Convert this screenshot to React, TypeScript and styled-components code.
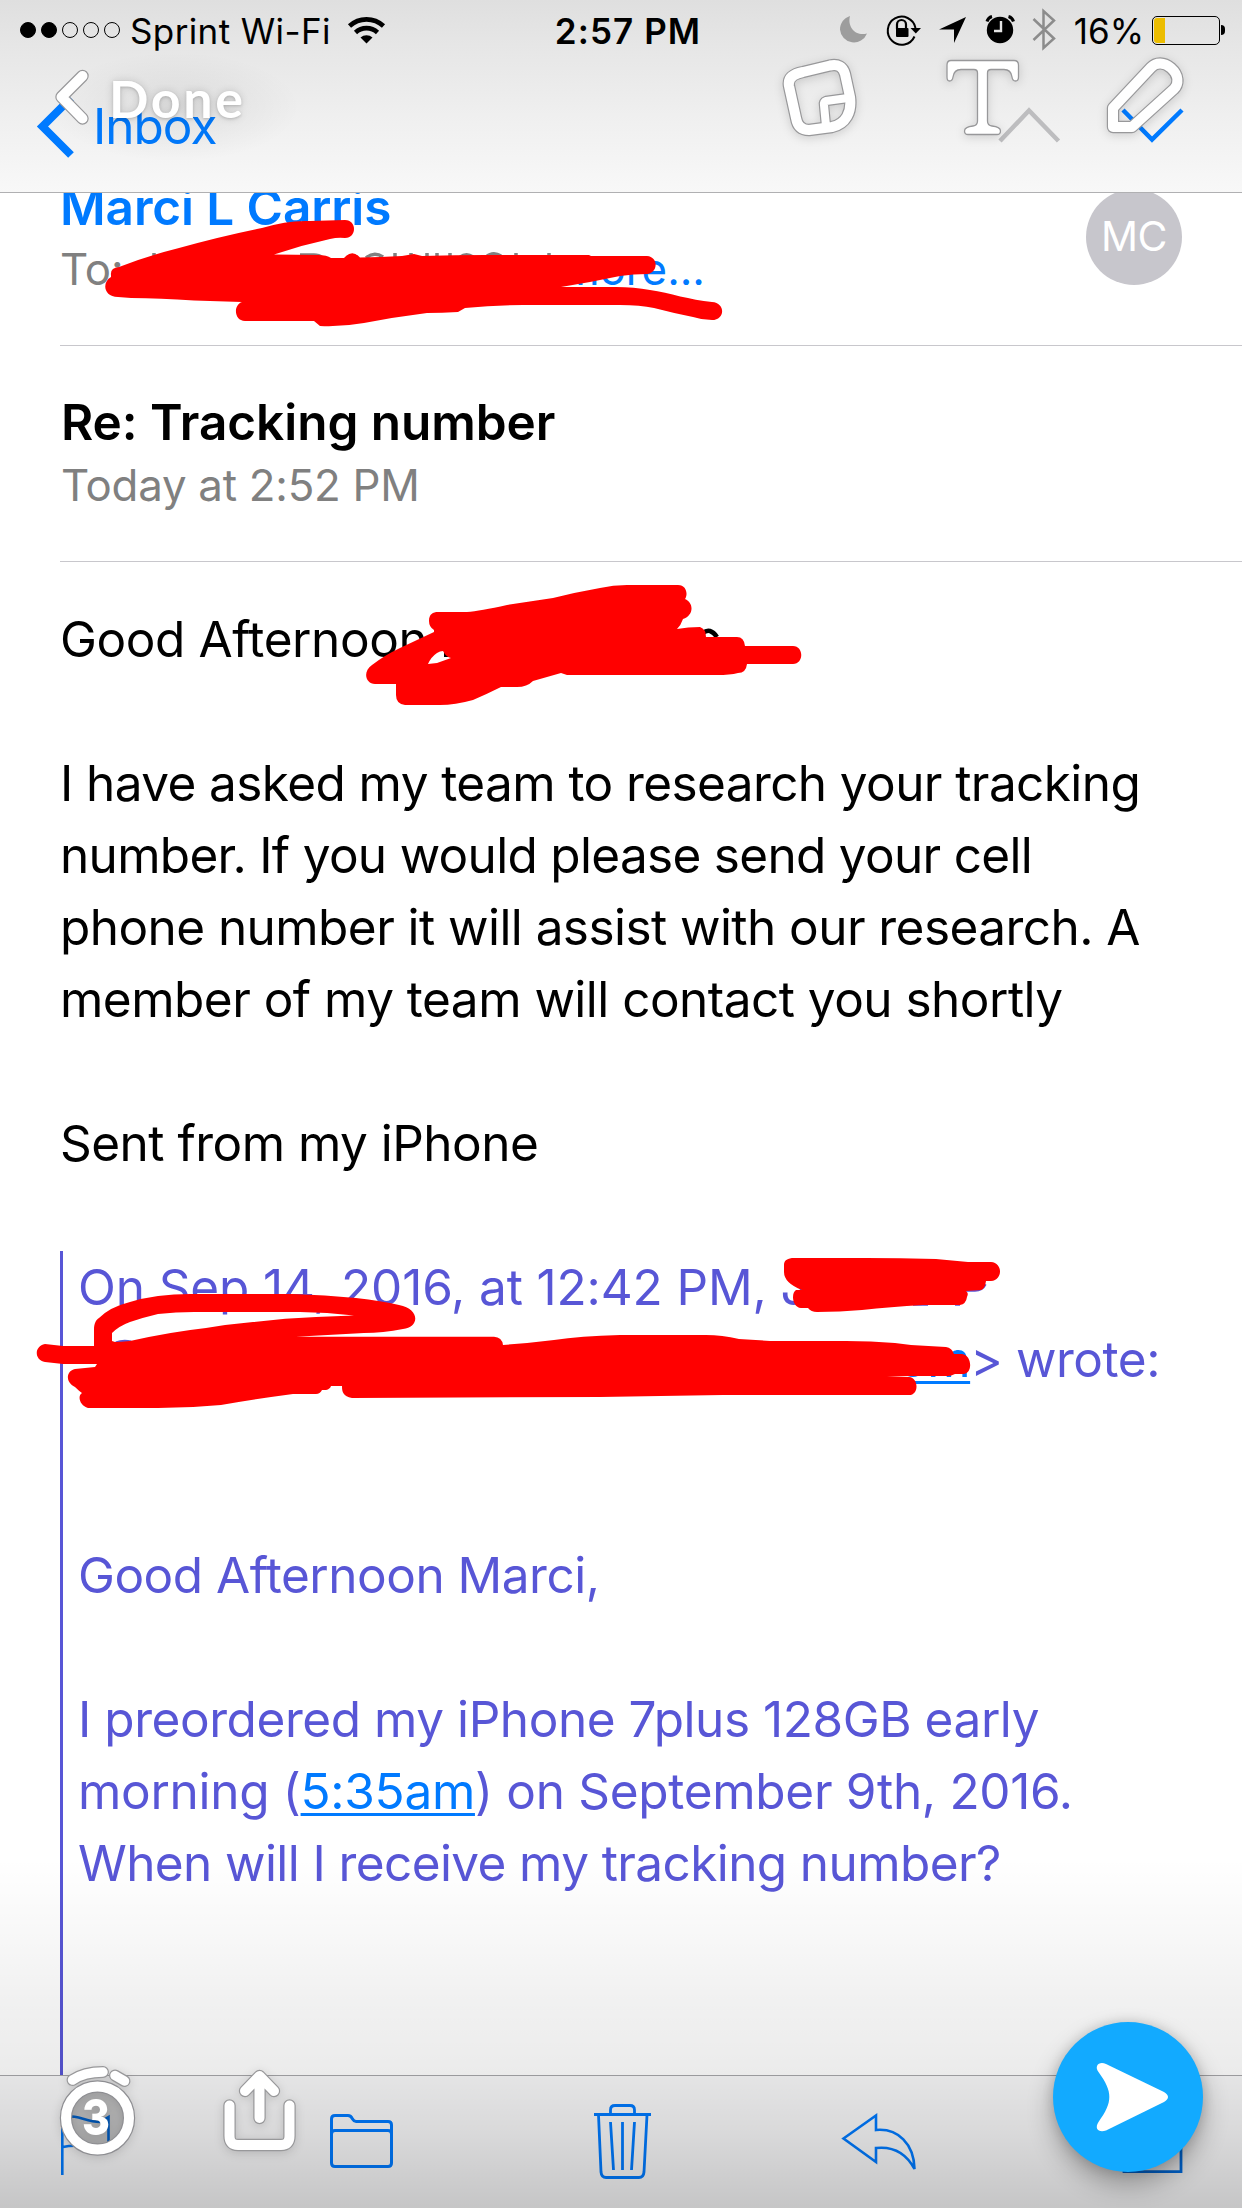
import React from "react";
import styled, { createGlobalStyle } from "styled-components";

const BLUE = "#007aff";
const QUOTE = "#5856d6";
const RED = "#ff0000";

const GlobalStyle = createGlobalStyle`
  body { margin: 0; background: #fff; }
  * { box-sizing: border-box; }
`;

/* ---------- shell ---------- */

const Screen = styled.div`
  position: relative;
  width: 1242px;
  height: 2208px;
  overflow: hidden;
  display: grid;
  grid-template-rows: 193px 1fr 133px;
  background: #fff;
  font-family: Inter, "Liberation Sans", sans-serif;
  color: #000;
`;

const Top = styled.header`
  background: linear-gradient(#dfdfdf 0, #e6e6e6 45px, #efefef 115px, #f8f8f8 192px);
  border-bottom: 1px solid #b0b0b2;
  display: flex;
  flex-direction: column;
`;

const StatusBar = styled.div`
  height: 60px;
  padding: 0 17px 0 20px;
  display: grid;
  grid-template-columns: 1fr auto 1fr;
  align-items: center;
`;

const StatusGroup = styled.div<{ $end?: boolean }>`
  display: flex;
  align-items: center;
  justify-content: ${(p) => (p.$end ? "flex-end" : "flex-start")};
  height: 60px;
`;

const StatusText = styled.span<{ $weight?: number; $spacing?: number; $before?: number }>`
  font-size: 35px;
  line-height: 60px;
  height: 60px;
  padding-top: 1px;
  margin-left: ${(p) => p.$before ?? 0}px;
  font-weight: ${(p) => p.$weight ?? 400};
  letter-spacing: ${(p) => p.$spacing ?? 0}px;
  white-space: nowrap;
`;

const Dots = styled.div`
  display: flex;
  gap: 5px;
  margin-right: 10px;
`;

const Dot = styled.i<{ $on?: boolean }>`
  width: 16px;
  height: 16px;
  border-radius: 50%;
  border: 1px solid #000;
  background: ${(p) => (p.$on ? "#000" : "transparent")};
`;

const Battery = styled.div`
  width: 68px;
  height: 29px;
  margin-left: 8px;
  padding: 1px;
  border: 1px solid #000;
  border-radius: 5px;
`;

const Charge = styled.div`
  width: 11px;
  height: 25px;
  background: #ecbd00;
  border-radius: 3px 0 0 3px;
`;

const BatteryTip = styled.div`
  width: 4px;
  height: 10px;
  margin-left: 1px;
  border-radius: 0 4px 4px 0;
  background: #000;
`;

const MailNav = styled.nav`
  flex: 1;
  display: flex;
  align-items: flex-start;
  justify-content: space-between;
  padding: 34px 58px 0 35px;
`;

const Back = styled.div`
  display: flex;
  align-items: flex-start;
  gap: 17px;
`;

const BackLabel = styled.span`
  color: ${BLUE};
  font-size: 49.5px;
  line-height: 60px;
  margin-top: 2px;
  letter-spacing: -1px;
`;

const NavArrows = styled.div`
  display: flex;
  gap: 60px;
  padding-top: 13px;
`;

/* ---------- message ---------- */

const Message = styled.main`
  overflow: hidden;
  display: flex;
  flex-direction: column;
`;

const From = styled.section`
  height: 153px;
  flex: none;
  margin-left: 60px;
  padding-right: 60px;
  border-bottom: 1px solid #c8c7cc;
  display: flex;
  justify-content: space-between;
`;

const Sender = styled.div`
  margin-top: -16px;
  color: ${BLUE};
  font-size: 49.5px;
  font-weight: 600;
  line-height: 60px;
  letter-spacing: -0.1px;
`;

const Recipient = styled.div`
  display: flex;
  justify-content: space-between;
  width: 645px;
  margin-top: 6px;
  font-size: 43.8px;
  line-height: 54px;
  color: #808080;
`;

const More = styled.span`
  color: ${BLUE};
`;

const Avatar = styled.div`
  width: 96px;
  height: 96px;
  margin-top: -4px;
  border-radius: 50%;
  background: #c7c6cc;
  color: #fff;
  font-size: 41px;
  line-height: 95px;
  text-align: center;
  letter-spacing: -0.5px;
`;

const Heading = styled.section`
  height: 216px;
  flex: none;
  margin-left: 60px;
  padding: 46px 0 0 1px;
  border-bottom: 1px solid #c8c7cc;
`;

const Subject = styled.h1`
  margin: 0;
  font-size: 49.5px;
  font-weight: 600;
  line-height: 60px;
  letter-spacing: -0.05px;
`;

const When = styled.div`
  margin-top: 7px;
  font-size: 43.8px;
  line-height: 54px;
  letter-spacing: -0.25px;
  color: #808080;
`;

const Body = styled.section`
  flex: 1;
  padding: 41px 0 0 60px;
  display: flex;
  flex-direction: column;
`;

const Line = styled.div<{ $spacing?: number; $indent?: number }>`
  height: 72px;
  flex: none;
  font-size: 49.5px;
  line-height: 72px;
  white-space: pre;
  letter-spacing: ${(p) => p.$spacing ?? -0.5}px;
  padding-left: ${(p) => p.$indent ?? 0}px;
`;

const Quote = styled.blockquote`
  flex: 1;
  margin: 0;
  padding-left: 15px;
  border-left: 3px solid ${QUOTE};
  color: ${QUOTE};
`;

const Link = styled.span`
  color: ${BLUE};
  text-decoration: underline;
  text-decoration-thickness: 3px;
  text-underline-offset: 4px;
  text-decoration-skip-ink: none;
`;

/* ---------- mail toolbar ---------- */

const Toolbar = styled.footer`
  background: #f8f8f9;
  border-top: 1px solid #a8a7ab;
  display: flex;
  justify-content: space-between;
  align-items: flex-start;
  padding: 26px 58px 0 59px;
`;

const BottomShade = styled.div`
  position: absolute;
  left: 0;
  right: 0;
  bottom: 0;
  height: 350px;
  background: linear-gradient(
    rgba(0, 0, 0, 0) 0,
    rgba(0, 0, 0, 0.055) 142px,
    rgba(0, 0, 0, 0.08) 215px,
    rgba(0, 0, 0, 0.125) 275px,
    rgba(0, 0, 0, 0.205) 350px
  );
`;

/* ---------- snap editor overlay ---------- */

const Ink = styled.svg`
  position: absolute;
  inset: 0;
  width: 1242px;
  height: 2208px;
`;

const EditorLayer = styled.div`
  position: absolute;
  inset: 0;
  display: flex;
  flex-direction: column;
  justify-content: space-between;
`;

const EditorTop = styled.div`
  display: flex;
  justify-content: space-between;
  align-items: flex-start;
  padding: 52px 54px 0 50px;
`;

const Done = styled.div`
  display: flex;
  align-items: flex-start;
  gap: 15px;
  background: radial-gradient(closest-side, rgba(0, 0, 0, 0.07), rgba(0, 0, 0, 0));
  width: 250px;
  height: 110px;
`;

const DoneLabel = styled.span`
  font-family: Lato, "Open Sans", sans-serif;
  font-weight: 700;
  font-size: 52px;
  line-height: 60px;
  margin-top: 16px;
  letter-spacing: 2.6px;
  color: #fff;
  text-shadow: 0 1px 3px rgba(0, 0, 0, 0.18), 0 0 9px rgba(0, 0, 0, 0.14);
`;

const Tools = styled.div`
  display: flex;
  gap: 78px;
  padding-top: 5px;
`;

const EditorBottom = styled.div`
  display: flex;
  justify-content: space-between;
  align-items: flex-start;
  height: 190px;
  padding: 0 39px 0 56px;
`;

const BottomTools = styled.div`
  display: flex;
  gap: 81px;
  padding-top: 44px;
`;

const SendButton = styled.div`
  width: 150px;
  height: 150px;
  margin-top: 4px;
  border-radius: 50%;
  background: #12aaff;
  box-shadow: 0 12px 26px rgba(0, 0, 0, 0.3), 0 0 12px rgba(0, 0, 0, 0.14);
`;

const Icon = styled.svg<{ $before?: number }>`
  display: block;
  flex: none;
  overflow: visible;
  margin-left: ${(p) => p.$before ?? 0}px;
`;

const SnapIcon = styled(Icon)`
  filter: drop-shadow(0 2px 5px rgba(0, 0, 0, 0.14));
`;

/* White strokes edged with a thin grey rim. */
function Rimmed({ d, width = 10 }: { d: string; width?: number }) {
  return (
    <g fill="none" strokeLinecap="round" strokeLinejoin="round">
      <path d={d} stroke="#98989a" strokeWidth={width + 2.4} />
      <path d={d} stroke="#fff" strokeWidth={width} />
    </g>
  );
}

function Status() {
  return (
    <StatusBar>
      <StatusGroup>
        <Dots>
          <Dot $on />
          <Dot $on />
          <Dot />
          <Dot />
          <Dot />
        </Dots>
        <StatusText $spacing={0.38}>Sprint Wi-Fi</StatusText>
        <Icon width="38" height="28" viewBox="348 15 38 28" $before={17}>
          <g fill="none" stroke="#000" strokeWidth="4.6">
            <path d="M349.5 25a25 25 0 0 1 34 0" />
            <path d="M355.5 31.5a16 16 0 0 1 22 0" />
          </g>
          <path d="M360.5 36.5a9 9 0 0 1 12 0l-6 6z" />
        </Icon>
      </StatusGroup>
      <StatusText $weight={600} $spacing={1.1} $before={11}>2:57 PM</StatusText>
      <StatusGroup $end>
        <Icon width="228" height="44" viewBox="838 9 228 44">
          <path d="M850 17c-6 2-10 7-10 13.500a14 14 0 0 0 27 4c-11 3-20-6-17-17.500z" fill="#9d9d9d" />
          <g fill="none" stroke="#000" strokeWidth="2">
            <path d="M914.5 37.500A14 14 0 1 1 915.500 29" />
            <path d="M897 30v-4.500a4.500 4.500 0 0 1 9 0V30" strokeWidth="2.200" />
          </g>
          <rect x="896" y="29" width="12.500" height="9" rx="1" />
          <path d="M910.500 29h10.500l-5.200 5.500z" />
          <path d="M966 18l-12 26v-13.500h-15z" />
          <circle cx="1000" cy="31" r="13.200" />
          <path d="M987 22.500a7 7 0 0 1 5-5M1013.500 22.500a7 7 0 0 0-5-5" fill="none" stroke="#000" strokeWidth="3" />
          <path d="M1001 22v10h-7" fill="none" stroke="#e4e4e4" strokeWidth="2.400" />
          <path d="M1033.500 20l20.500 19.500-10.500 9.500V12l10.500 9.500L1033.500 41" fill="none" stroke="#8c8c8c" strokeWidth="2.500" />
        </Icon>
        <StatusText $before={8}>16%</StatusText>
        <Battery>
          <Charge />
        </Battery>
        <BatteryTip />
      </StatusGroup>
    </StatusBar>
  );
}

const scribbles = [
  "M111 275Q110 268 119 267Q147 256 179 248Q222 236 262 228Q288 220 310 221L345 220C357 220 357 238 345 238Q338 237 330 239Q302 245 274 254.500L318 255Q327 255 331 258H344Q352 249 360 257.500Q380 257 402 256L414 254L422 256Q455 255 485 255H589L591 256H647C659 257 658 273 647 274Q634 274 620 276Q592 282 561 287H616Q634 287 650 290C670 293 690 300 712 302C726 303 725 320 712 320Q702 320 693 317Q673 313 654 308Q640 305 620 305H523Q494 305 465 308L458 312Q442 313 427 313Q395 317 364 323Q342 327 320 326L314 321H245C234 321 233 305 242 302Q218 301 194 300.500Q160 298 131 298L118 297C103 297 102 282 111 277Z",
  "M429 621C429 614 433 612 438 612H467Q480 611 507 605L553 598Q577 592 600 588Q613 585 627 585H678C687 585 688 595 685 599C694 603 694 615 683 619Q681 625 677 629Q688 627 700 627Q706 629 706 637H737Q744 637 745 646H793C804 646 804 664 793 664H747Q746 673 738 673Q730 675 717 675H567L561 673Q547 677 533 681Q527 687 517 687H501Q487 694 473 700Q455 705 440 705H405Q396 704 396 695V684H375C366 684 362 672 372 665Q385 655 400 648L434 632V630Q429 627 429 621ZM428 664Q431 657 437 653Q440 651 443 651Q446 657 451 658L437 663Z",
  "M45 1362C34 1360 34 1346 45 1344L63 1346H94V1330C94 1323 96 1320 99 1318Q110 1307 130 1302Q143 1298 158 1296Q174 1294 190 1294H293Q325 1295 356 1298Q382 1301 399 1305C421 1309 419 1328 403 1329Q383 1333 364 1333L296 1336.700H494Q502 1337 503 1345Q530 1343 554 1340Q580 1336 620 1335H706Q722 1335 739 1339L770 1341H846Q871 1341 895 1343L911 1345L946 1347Q952 1348 954 1354H962C972 1355 973 1373 964 1374H955Q951 1376 948 1376H887L909 1377C919 1378 919 1395 909 1395H723Q660 1396 600 1397L352 1398C343 1396 342 1392 342 1386H331Q330 1389 326 1390H322Q320 1394 316 1394H293Q255 1399 221 1405Q190 1408 158 1408H88C80 1406 77 1396 82 1393Q79 1391 75 1387C65 1382 66 1371 75 1369L95 1367L97 1364H63ZM112 1333V1341L115 1342Q121 1342 130 1341Q170 1332 206 1328Q230 1324 253 1322Q285 1318 316 1317L354 1315.500Q327 1312 300 1312H194Q176 1312 158 1314Q145 1317 130 1322Q119 1326 112 1333Z",
  "M784 1265C784 1260 788 1258 794 1258H866Q900 1258 936 1259L968 1262H991C1003 1263 1003 1280 991 1281H986Q985 1289 981 1290L966 1291Q969 1293 967 1297Q966 1304 960 1305H923Q890 1307 862 1310Q840 1312 817 1312Q811 1312 808 1308H801C792 1307 791 1293 796 1290H802Q784 1283 784 1272Z",
];

export default function App() {
  return (
    <Screen>
      <GlobalStyle />
      <Top>
        <Status />
        <MailNav>
          <Back>
            <Icon width="41" height="64" viewBox="36 94 41 64">
              <path d="M72 98L43.500 126.500L72 155" fill="none" stroke={BLUE} strokeWidth="8" />
            </Icon>
            <BackLabel>Inbox</BackLabel>
          </Back>
          <NavArrows>
            <Icon width="63" height="38" viewBox="998 107 63 38">
              <path d="M1000 141L1029 110.500L1058.500 141" fill="none" stroke="#bdbdbf" strokeWidth="4.500" />
            </Icon>
            <Icon width="63" height="38" viewBox="1120 107 63 38">
              <path d="M1122 110L1151 139.500L1181 110" fill="none" stroke={BLUE} strokeWidth="4.500" />
            </Icon>
          </NavArrows>
        </MailNav>
      </Top>

      <Message>
        <From>
          <div>
            <Sender>Marci L Carris</Sender>
            <Recipient>
              <span>To:</span>
              <More>more...</More>
            </Recipient>
          </div>
          <Avatar>MC</Avatar>
        </From>
        <Heading>
          <Subject>Re: Tracking number</Subject>
          <When>Today at 2:52 PM</When>
        </Heading>
        <Body>
          <Line $spacing={-0.42}>Good Afternoon</Line>
          <Line />
          <Line $spacing={-0.59}>I have asked my team to research your tracking</Line>
          <Line $spacing={-0.69}>number. If you would please send your cell</Line>
          <Line $spacing={-0.56}>phone number it will assist with our research. A</Line>
          <Line $spacing={-0.52}>member of my team will contact you shortly</Line>
          <Line />
          <Line $spacing={-0.52}>Sent from my iPhone</Line>
          <Line />
          <Quote>
            <Line $spacing={-0.13}>On Sep 14, 2016, at 12:42 PM, J</Line>
            <Line $spacing={-0.46} $indent={820}>
              <Link>om</Link>&gt; wrote:
            </Line>
            <Line />
            <Line />
            <Line $spacing={-0.5}>Good Afternoon Marci,</Line>
            <Line />
            <Line $spacing={-0.44}>I preordered my iPhone 7plus 128GB early</Line>
            <Line $spacing={-0.3}>
              morning (<Link>5:35am</Link>) on September 9th, 2016.
            </Line>
            <Line $spacing={-0.6}>When will I receive my tracking number?</Line>
          </Quote>
        </Body>
      </Message>

      <Toolbar>
        <Icon width="54" height="76" viewBox="59 2102 54 76" fill="none" stroke={BLUE} strokeWidth="2.600">
          <path d="M62.300 2175V2117C80 2114 84 2122 100 2122L108.500 2117V2144C92 2152 84 2142 63 2147" />
        </Icon>
        <Icon width="64" height="76" viewBox="330 2102 64 76" fill="none" stroke={BLUE} strokeWidth="3" $before={39}>
          <path d="M331.500 2163V2119Q331.500 2115.500 335 2115.500H348Q351 2115.500 352.500 2119Q354 2121.500 356 2121.500H388Q391.500 2121.500 391.500 2125V2163Q391.500 2166.500 388 2166.500H335Q331.500 2166.500 331.500 2163ZM331.500 2134Q331.500 2130.500 335 2130.500H388Q391.500 2130.500 391.500 2134" />
        </Icon>
        <Icon width="58" height="78" viewBox="595 2102 58 78" fill="none" stroke={BLUE} strokeWidth="2.800" $before={23}>
          <path d="M594 2114.500H651M610.500 2114V2110Q610.500 2105.500 615 2105.500H630Q634.500 2105.500 634.500 2110V2114M598.500 2115L601 2172Q601.500 2177.500 606 2177.500H639Q643.500 2177.500 644 2172L647 2115M610.500 2122L613.500 2170M622.500 2122V2170M634.500 2122L631.500 2170" />
        </Icon>
        <Icon width="76" height="76" viewBox="841 2102 76 76" fill="none" stroke={BLUE} strokeWidth="2.600" $before={11}>
          <path d="M843.500 2138.500L876 2115.500V2130C898 2128 914 2144 914.500 2169C906 2153 894 2146 876 2148V2162Z" />
        </Icon>
        <Icon width="62" height="76" viewBox="1122 2102 62 76" fill="none" stroke="#0070e8" strokeWidth="2.800" $before={27}>
          <path d="M1150 2116H1124V2171.700H1181V2140" />
        </Icon>
      </Toolbar>

      <BottomShade />

      <Ink>
        <g fill="none" stroke="#808080" strokeWidth="3.500">
          <path d="M154 253V262M300 255H314Q320 255 322 258M366 258Q374 251 383 257M395 253V257M411 253V256M427 253V256M437 253V256M450 253V257M459 258Q466 252 473 257M486 257Q493 251 501 256M516 253V256M549 253V256" />
        </g>
        <path d="M703 633Q710 627 717 637" fill="none" stroke="#000" strokeWidth="4.500" />
        <path d="M446 650V657" stroke="#000" strokeWidth="4" />
        <path d="M966 1290H975Q982 1290 985 1284M913 1304H928M955 1304H960" fill="none" stroke={QUOTE} strokeWidth="3.500" />
        <path d="M116 1343Q123 1340 131 1342" fill="none" stroke={QUOTE} strokeWidth="3" />
        {scribbles.map((d) => (
          <path key={d} d={d} fill={RED} fillRule="evenodd" />
        ))}
      </Ink>

      <EditorLayer>
        <EditorTop>
          <Done>
            <Icon width="44" height="70" viewBox="50 52 44 70">
              <Rimmed d="M82.500 76L61.500 97L82.500 118.500" />
            </Icon>
            <DoneLabel>Done</DoneLabel>
          </Done>
          <Tools>
            <SnapIcon width="76" height="80" viewBox="782 57 76 80">
              <g fill="none" strokeLinejoin="round">
                <path d="M803 72L830 65.500Q842 63 845 74L850 97C852 112 846 124 832 127L809 130Q798 130 796 118L789 86Q787 75 803 72Z" stroke="#98989a" strokeWidth="12.400" />
                <path d="M848 98L826 101Q823.500 102 824 105L826 126" stroke="#98989a" strokeWidth="10.400" />
                <path d="M803 72L830 65.500Q842 63 845 74L850 97C852 112 846 124 832 127L809 130Q798 130 796 118L789 86Q787 75 803 72Z" stroke="#fff" strokeWidth="10" />
                <path d="M848 98L826 101Q823.500 102 824 105L826 126" stroke="#fff" strokeWidth="8" />
              </g>
            </SnapIcon>
            <SnapIcon width="76" height="80" viewBox="945 57 76 80" $before={9}>
              <path
                d="M951 60.500H1014Q1018.500 60.500 1018.500 65V77Q1018.500 81 1015.500 81Q1012.500 81 1012 77Q1011 69.500 1004 69.500H991Q987.500 69.500 987.500 73V121Q987.500 125.500 992 126Q1000.500 127 1000.500 131Q1000.500 134.500 997 134.500H968Q964.500 134.500 964.500 131Q964.500 127 973 126Q977.500 125.500 977.500 121V73Q977.500 69.500 974 69.500H961Q954 69.500 953 77Q952.500 81 949.500 81Q947 81 947 77V65Q947 60.500 951 60.500Z"
                fill="#fff"
                stroke="#98989a"
                strokeWidth="1.300"
              />
            </SnapIcon>
            <SnapIcon width="84" height="80" viewBox="1104 56 84 80" $before={5}>
              <Rimmed d="M1113 107L1151 66.500C1156 61 1164 61 1171 67C1179 74 1179 83 1174 88L1132 126H1113Z" />
            </SnapIcon>
          </Tools>
        </EditorTop>
        <EditorBottom>
          <BottomTools>
            <SnapIcon width="84" height="100" viewBox="56 2062 84 100">
              <circle cx="97.500" cy="2118" r="31" fill="rgba(0,0,0,0.2)" />
              <circle cx="97.500" cy="2118" r="31.500" fill="none" stroke="#8e8e92" strokeWidth="12.400" />
              <circle cx="97.500" cy="2118" r="31.500" fill="none" stroke="#fff" strokeWidth="10" />
              <Rimmed d="M72.500 2080Q84 2072 103 2072" width={9.5} />
              <Rimmed d="M115 2075.500L124.500 2081" width={9.5} />
              <text x="96" y="2134.500" textAnchor="middle" fontFamily="Inter, sans-serif" fontWeight="800" fontSize="50" fill="#fff" textLength="28" lengthAdjust="spacingAndGlyphs">3</text>
            </SnapIcon>
            <SnapIcon width="76" height="90" viewBox="221 2062 76 90">
              <Rimmed d="M229.500 2105.500V2136Q229.500 2145 238 2145H281Q289.500 2145 289.500 2136V2105.500" />
              <Rimmed d="M259.500 2118V2077M245 2091L259.500 2076L274 2091" />
            </SnapIcon>
          </BottomTools>
          <SendButton>
            <Icon width="150" height="150" viewBox="1053 2022 150 150">
              <path
                d="M1106 2064L1164 2092Q1172 2097 1164 2102L1106 2130.500C1099 2133 1094 2129 1098.500 2122C1113 2102 1113 2092 1098.500 2072C1094 2066 1099 2061 1106 2064Z"
                fill="#fff"
              />
            </Icon>
          </SendButton>
        </EditorBottom>
      </EditorLayer>
    </Screen>
  );
}
